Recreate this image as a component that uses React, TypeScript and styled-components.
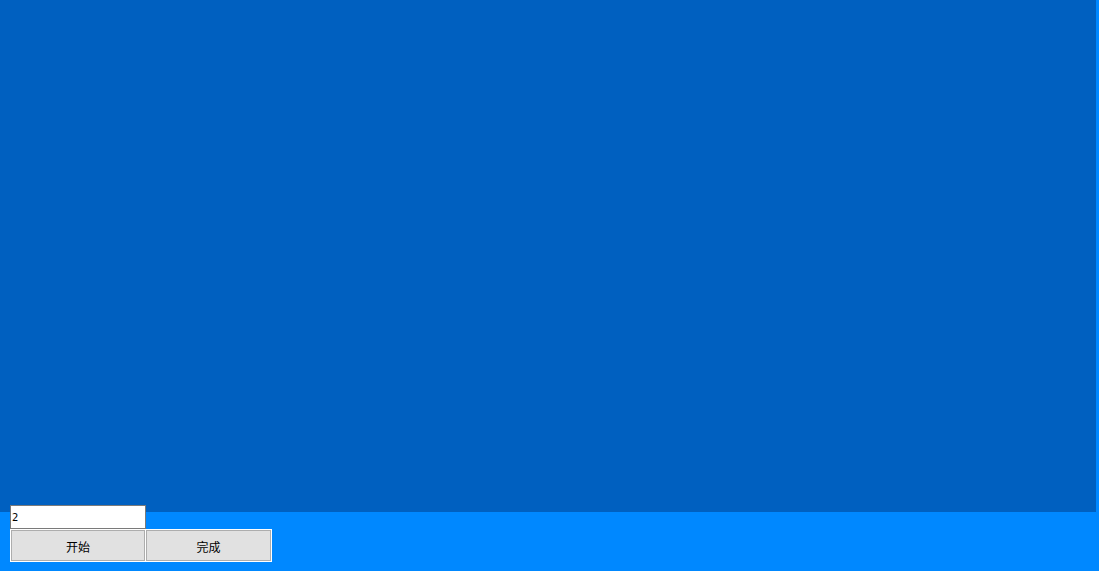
import React from "react";
import styled, { createGlobalStyle } from "styled-components";

const GlobalStyle = createGlobalStyle`
  html, body {
    margin: 0;
    padding: 0;
    background: #0088ff;
    overflow: hidden;
  }
  body {
    font-family: "Liberation Sans", "Noto Sans CJK SC", sans-serif;
  }
`;

const Page = styled.div`
  position: relative;
  width: 1099px;
  height: 571px;
  background: #0088ff;
`;

const Stage = styled.div`
  width: 1096px;
  height: 512px;
  background: #0060c0;
`;

// the control panel sits over the bottom edge of the stage
const Controls = styled.div`
  position: absolute;
  left: 10px;
  top: 505px;
  display: flex;
  flex-direction: column;
  align-items: flex-start;
`;

const CountInput = styled.input`
  box-sizing: border-box;
  width: 136px;
  height: 24px;
  margin: 0;
  padding: 0 0 0 1px;
  border: 1px solid #7a7a7a;
  background: #fff;
  color: #000;
  font-family: "DejaVu Sans", "Liberation Sans", sans-serif;
  font-size: 10px;
  outline: none;
`;

const ButtonRow = styled.div`
  display: flex;
  gap: 1px;
  margin: 1px 0 0 1px;
`;

const ActionButton = styled.button<{ $width: number }>`
  box-sizing: border-box;
  width: ${(p) => p.$width}px;
  height: 31px;
  margin: 0;
  padding: 2px 0 0;
  border: 1px solid #adadad;
  box-shadow: 0 0 0 1px #ffffff;
  background: #e1e1e1;
  color: #000;
  font-family: "Noto Sans CJK SC", "Liberation Sans", sans-serif;
  font-size: 12px;
  line-height: 1;
  cursor: pointer;
`;

export default function App() {
  return (
    <>
      <GlobalStyle />
      <Page>
        <Stage />
        <Controls>
          <CountInput type="text" defaultValue="2" />
          <ButtonRow>
            <ActionButton $width={134}>开始</ActionButton>
            <ActionButton $width={125}>完成</ActionButton>
          </ButtonRow>
        </Controls>
      </Page>
    </>
  );
}
